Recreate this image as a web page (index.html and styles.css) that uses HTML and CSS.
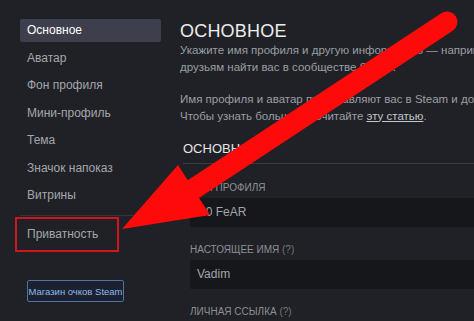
FILE: index.html
```html
<!DOCTYPE html>
<html lang="ru">
<head>
    <meta charset="UTF-8">
    <meta name="viewport" content="width=device-width, initial-scale=1.0">
    <title>Редактировать профиль</title>
    <link rel="stylesheet" href="styles.css">
</head>
<body>
    <div class="page">
        <aside class="sidebar">
            <a class="nav-item active">Основное</a>
            <a class="nav-item">Аватар</a>
            <a class="nav-item">Фон профиля</a>
            <a class="nav-item">Мини-профиль</a>
            <a class="nav-item">Тема</a>
            <a class="nav-item">Значок напоказ</a>
            <a class="nav-item">Витрины</a>
            <div class="nav-sep"></div>
            <a class="nav-item">Приватность</a>
            <button class="btn-shop">Магазин очков Steam</button>
        </aside>

        <main class="content">
            <h1>ОСНОВНОЕ</h1>
            <p class="intro">Укажите имя профиля и другую информацию — например, описание и настоящее имя. Это поможет<br>друзьям найти вас в сообществе Steam.</p>
            <p class="intro">Имя профиля и аватар представляют вас в Steam и должны соответствовать правилам.<br>Чтобы узнать больше, прочитайте <a class="link">эту статью</a>.</p>

            <section class="section">
                <h2>ОСНОВНОЕ</h2>
                <div class="fields">
                    <label class="field-label">Имя профиля</label>
                    <div class="input">N0 FeAR</div>
                    <label class="field-label">Настоящее имя <span class="hint">(?)</span></label>
                    <div class="input">Vadim</div>
                    <label class="field-label">Личная ссылка <span class="hint">(?)</span></label>
                </div>
            </section>
        </main>
    </div>

    <!-- пометки поверх скриншота -->
    <svg class="annotation" width="474" height="321" viewBox="0 0 474 321">
        <rect x="16" y="218" width="102" height="33" fill="none" stroke="#d0161c" stroke-width="2"/>
        <line x1="447" y1="22" x2="192" y2="190" stroke="#ff0a0a" stroke-width="21" stroke-linecap="round"/>
        <polygon points="122,229 178,165 210,215" fill="#ff0a0a"/>
    </svg>
</body>
</html>
```

FILE: styles.css
```css
* {
    font-family: "Liberation Sans", Arial, sans-serif;
    padding: 0;
    margin: 0;
    box-sizing: border-box;
}

body {
    background-color: #1f2126;
    width: 474px;
    height: 321px;
    overflow: hidden;
    position: relative;
}

.page {
    display: flex;
    width: 760px;
}

.sidebar {
    width: 170px;
    flex-shrink: 0;
    padding: 19px 9px 0 20px;
    display: flex;
    flex-direction: column;
}

.nav-item {
    display: block;
    height: 23px;
    line-height: 23px;
    padding-left: 7px;
    margin-bottom: 4.5px;
    font-size: 12px;
    color: #a4a6ac;
    border-radius: 2px;
}

.nav-item.active {
    background-color: #3d404c;
    color: #ffffff;
}

.nav-sep {
    height: 1px;
    background-color: #34363c;
    margin: 3px -9px 7px 0;
}

.btn-shop {
    align-self: flex-start;
    margin: 30px 0 0 7px;
    width: 97px;
    height: 22px;
    font-size: 9.5px;
    color: #90b9ea;
    background-color: #1b2130;
    border: 1px solid #4f7399;
    border-radius: 2px;
}

.content {
    padding: 22px 0 0 10px;
    width: 590px;
}

h1 {
    font-size: 18px;
    font-weight: normal;
    line-height: 18px;
    color: #ececec;
    letter-spacing: 0.2px;
}

.intro {
    font-size: 11.5px;
    line-height: 17px;
    color: #9c9ea4;
    white-space: nowrap;
    margin-top: 1.5px;
    margin-bottom: 15px;
}

.intro + .intro {
    margin-top: 0;
    margin-bottom: 16px;
}

.link {
    color: #c4c6ca;
    text-decoration: underline;
}

.section {
    margin-left: 3px;
}

h2 {
    font-size: 13px;
    font-weight: normal;
    line-height: 16px;
    color: #e6e6e6;
    padding-bottom: 6px;
    border-bottom: 1px solid #3a3c42;
}

.fields {
    padding: 18px 0 0 7px;
}

.field-label {
    display: block;
    font-size: 10px;
    line-height: 12px;
    text-transform: uppercase;
    color: #8d8f95;
    margin-bottom: 4px;
}

.hint {
    color: #74767c;
}

.input {
    height: 29px;
    line-height: 29px;
    padding-left: 7px;
    font-size: 12px;
    color: #a3a5ab;
    background-color: #16171b;
    border-radius: 2px;
    margin-bottom: 17px;
}

.annotation {
    position: absolute;
    top: 0;
    left: 0;
    pointer-events: none;
}
```
